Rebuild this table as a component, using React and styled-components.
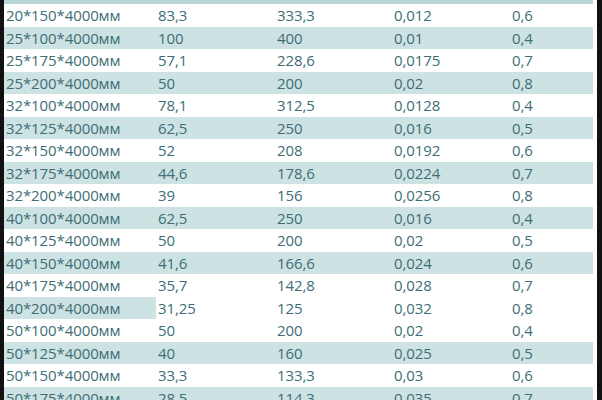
import React from "react";
import styled, { createGlobalStyle } from "styled-components";

const GlobalStyle = createGlobalStyle`
  html, body {
    margin: 0;
    padding: 0;
    background: #fff;
  }
  body {
    width: 602px;
    height: 400px;
    overflow: hidden;
  }
`;

const Frame = styled.div`
  width: 602px;
  height: 400px;
  box-sizing: border-box;
  border-left: 4px solid #111;
  border-right: 5px solid #111;
  padding-right: 4px;
  background: #fff;
  overflow: hidden;
  font-family: "Open Sans", "Noto Sans", sans-serif;
  font-size: 15px;
  color: #3e6d75;
`;

const HeadStrip = styled.div`
  height: 4px;
  background: #b9d6d8;
`;

const Row = styled.div`
  display: grid;
  grid-template-columns: 152px 119px 117px 118px 1fr;
  height: 22.5px;
  background: ${(p) => (p.shaded ? "#cde2e3" : "#fff")};
`;

const Cell = styled.div`
  display: flex;
  align-items: center;
  padding-left: 2px;
  white-space: nowrap;
  letter-spacing: -0.1px;
  background: ${(p) => (p.mark ? "#cde2e3" : "transparent")};
`;

const rows = [
  ["20*150*4000мм", "83,3", "333,3", "0,012", "0,6"],
  ["25*100*4000мм", "100", "400", "0,01", "0,4"],
  ["25*175*4000мм", "57,1", "228,6", "0,0175", "0,7"],
  ["25*200*4000мм", "50", "200", "0,02", "0,8"],
  ["32*100*4000мм", "78,1", "312,5", "0,0128", "0,4"],
  ["32*125*4000мм", "62,5", "250", "0,016", "0,5"],
  ["32*150*4000мм", "52", "208", "0,0192", "0,6"],
  ["32*175*4000мм", "44,6", "178,6", "0,0224", "0,7"],
  ["32*200*4000мм", "39", "156", "0,0256", "0,8"],
  ["40*100*4000мм", "62,5", "250", "0,016", "0,4"],
  ["40*125*4000мм", "50", "200", "0,02", "0,5"],
  ["40*150*4000мм", "41,6", "166,6", "0,024", "0,6"],
  ["40*175*4000мм", "35,7", "142,8", "0,028", "0,7"],
  ["40*200*4000мм", "31,25", "125", "0,032", "0,8"],
  ["50*100*4000мм", "50", "200", "0,02", "0,4"],
  ["50*125*4000мм", "40", "160", "0,025", "0,5"],
  ["50*150*4000мм", "33,3", "133,3", "0,03", "0,6"],
  ["50*175*4000мм", "28,5", "114,3", "0,035", "0,7"],
];

export default function App() {
  return (
    <>
      <GlobalStyle />
      <Frame>
        <HeadStrip />
        {rows.map((r, i) => {
          // row 13 only has its first cell tinted in the source
          const partial = i === 13;
          const shaded = i % 2 === 1 && !partial;
          return (
            <Row key={r[0]} shaded={shaded}>
              {r.map((v, j) => (
                <Cell key={j} mark={partial && j === 0}>
                  {v}
                </Cell>
              ))}
            </Row>
          );
        })}
      </Frame>
    </>
  );
}
